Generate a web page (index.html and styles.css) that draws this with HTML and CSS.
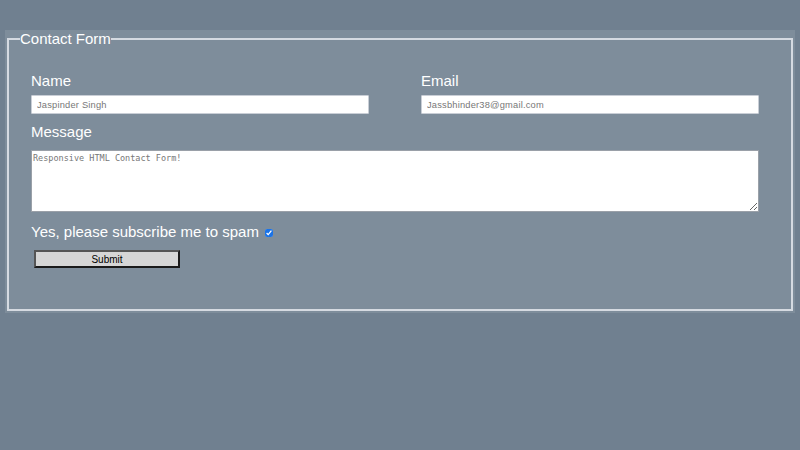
FILE: index.html
```html
<!DOCTYPE html>
<html lang="en">

<head>
    <meta charset="UTF-8">
    <meta name="viewport" content="width=device-width, initial-scale=1.0">
    <title>Contact Form</title>
    <link rel="stylesheet" href="styles.css">
</head>

<body>
    <div class="form-wrapper">
        <form class="contact-form" action="" method="POST">
            <fieldset>
                <legend>Contact Form</legend>
                <div class="row">
                    <div class="field">
                        <label for="name">Name</label>
                        <input id="name" type="text" name="name" placeholder="Jaspinder Singh" />
                    </div>
                    <div class="field">
                        <label for="email">Email</label>
                        <input id="email" type="email" name="email" placeholder="Jassbhinder38@gmail.com" />
                    </div>
                </div>
                <div class="field">
                    <label for="message">Message</label>
                    <textarea id="message" name="message" placeholder="Responsive HTML Contact Form!"></textarea>
                </div>
                <div class="subscribe">
                    <label for="spam">Yes, please subscribe me to spam</label>
                    <input id="spam" type="checkbox" name="spam" checked />
                </div>
                <input class="submit" type="submit" value="Submit" />
            </fieldset>
        </form>
    </div>
</body>

</html>
```

FILE: styles.css
```css
/* Global Styles */
* {
    box-sizing: border-box;
}

body {
    margin: 0;
    background-color: #708090;
    font-family: 'Liberation Sans', Arial, sans-serif;
    color: #ffffff;
}

/* Wrapper */
.form-wrapper {
    margin: 30px 5px 0;
    padding-bottom: 2px;
    background-color: rgba(255, 255, 255, 0.1);
}

.contact-form fieldset {
    margin: 0 2px;
    padding: 25px 32px 41px 22px;
    border: 2px solid rgba(235, 238, 242, 0.8);
}

.contact-form legend {
    margin-left: -11px;
    padding: 0;
    font-size: 15px;
    color: #ffffff;
}

/* Fields */
.row {
    display: grid;
    grid-template-columns: 1fr 1fr;
    gap: 52px;
}

.field {
    display: flex;
    flex-direction: column;
}

.field label {
    font-size: 15px;
    line-height: 17px;
    margin-bottom: 6px;
}

.field input {
    height: 19px;
    margin-bottom: 9px;
    padding: 0 5px;
    border: 1px solid #c9ced6;
    border-radius: 1px;
    font-family: 'Liberation Sans', Arial, sans-serif;
    font-size: 9.3px;
    letter-spacing: 0.2px;
    background-color: #ffffff;
}

.field input::placeholder,
.field textarea::placeholder {
    color: #777777;
}

.field textarea {
    height: 62px;
    margin-top: 4px;
    padding: 2px 1px;
    border: 1px solid #9aa0a8;
    font-family: 'DejaVu Sans Mono', monospace;
    font-size: 8.5px;
    background-color: #ffffff;
}

/* Subscribe */
.subscribe {
    display: flex;
    align-items: center;
    gap: 6px;
    margin-top: 11px;
    font-size: 15px;
    line-height: 17px;
}

.subscribe input {
    width: 8px;
    height: 8px;
    margin: 2px 0 0;
    accent-color: #1a73e8;
}

/* Submit */
.submit {
    display: block;
    width: 146px;
    height: 18px;
    margin: 10px 0 0 3px;
    padding: 0;
    border: 2px solid #1a1a1a;
    border-top-color: #555555;
    border-left-color: #555555;
    background-color: #d6d6d6;
    font-family: 'Liberation Sans', Arial, sans-serif;
    font-size: 10px;
    color: #000000;
}
```
